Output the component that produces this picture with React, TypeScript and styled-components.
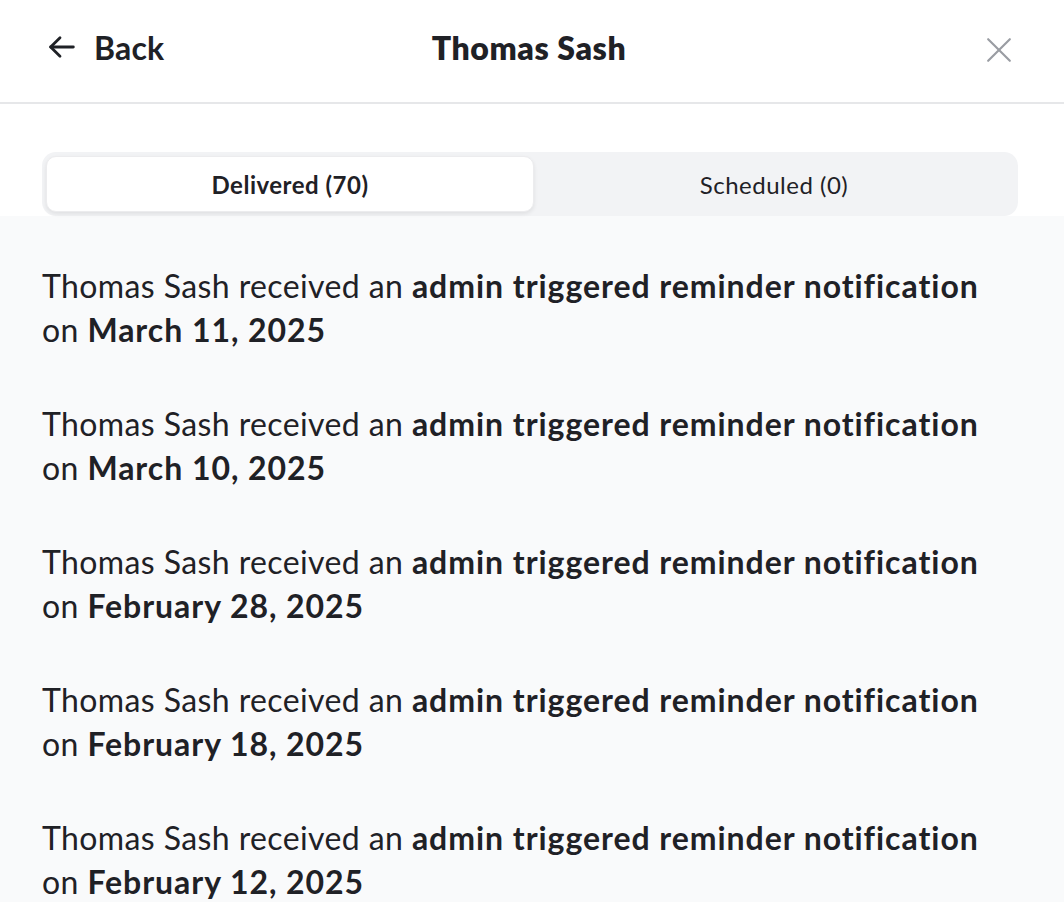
import React, {useState} from 'react';
import styled, {createGlobalStyle} from 'styled-components';

const GlobalStyle = createGlobalStyle`
	html, body {
		margin: 0;
		padding: 0;
		background: #ffffff;
	}
	body {
		font-family: Lato, "Noto Sans", sans-serif;
		color: #1f2126;
	}
`;

const Page = styled.div`
	width: 1064px;
	min-height: 902px;
	display: flex;
	flex-direction: column;
	background: #f9fafb;
`;

const Header = styled.header`
	height: 104px;
	box-sizing: border-box;
	display: grid;
	grid-template-columns: 1fr auto 1fr;
	align-items: center;
	padding: 0 52px 8px 46px;
	background: #ffffff;
	border-bottom: 2px solid #e6e7e9;
`;

const BackButton = styled.button`
	justify-self: start;
	display: flex;
	align-items: center;
	gap: 16px;
	background: none;
	border: none;
	padding: 0;
	font-family: inherit;
	font-size: 32px;
	font-weight: 700;
	letter-spacing: 0.2px;
	color: #1f2126;
	cursor: pointer;
`;

const Title = styled.h1`
	margin: 0;
	font-size: 32px;
	font-weight: 800;
	letter-spacing: 0.6px;
	color: #1f2126;
`;

const CloseButton = styled.button`
	justify-self: end;
	display: flex;
	margin-top: 6px;
	background: none;
	border: none;
	padding: 0;
	cursor: pointer;
`;

const TabsArea = styled.div`
	background: #ffffff;
	padding: 48px 46px 0 42px;
`;

const TabList = styled.div`
	display: grid;
	grid-template-columns: 488px 1fr;
	padding: 4px;
	height: 64px;
	box-sizing: border-box;
	background: #f2f3f5;
	border-radius: 14px;
`;

const Tab = styled.button<{$active?: boolean}>`
	border: ${p => (p.$active ? '1px solid #ececee' : 'none')};
	border-radius: 10px;
	background: ${p => (p.$active ? '#ffffff' : 'transparent')};
	box-shadow: ${p => (p.$active ? '0 2px 4px rgba(0, 0, 0, 0.08)' : 'none')};
	font-family: inherit;
	font-size: 24px;
	letter-spacing: 0.5px;
	font-weight: ${p => (p.$active ? 700 : 400)};
	color: #1f2126;
	cursor: pointer;
`;

const List = styled.ul`
	list-style: none;
	margin: 0;
	padding: 48px 42px 0;
	display: flex;
	flex-direction: column;
	gap: 50px;
`;

const Item = styled.li`
	font-size: 32px;
	line-height: 44px;
	letter-spacing: 0.4px;
	color: #1f2126;

	b {
		font-weight: 700;
		letter-spacing: 0.95px;
	}
`;

const ArrowLeft = () => (
	<svg width="32" height="32" viewBox="0 0 24 24" fill="none" stroke="#1f2126" strokeWidth="2.1" strokeLinecap="round" strokeLinejoin="round">
		<path d="M20.5 12H3.5" />
		<path d="M10.5 5l-7 7 7 7" />
	</svg>
);

const CloseIcon = () => (
	<svg width="26" height="26" viewBox="0 0 24 24" fill="none" stroke="#9a9da3" strokeWidth="2" strokeLinecap="round">
		<path d="M2 2l20 20" />
		<path d="M22 2L2 22" />
	</svg>
);

const dates = ['March 11, 2025', 'March 10, 2025', 'February 28, 2025', 'February 18, 2025', 'February 12, 2025'];

export default function App() {
	const [tab, setTab] = useState<'delivered' | 'scheduled'>('delivered');

	return (
		<Page>
			<GlobalStyle />
			<Header>
				<BackButton>
					<ArrowLeft />
					Back
				</BackButton>
				<Title>Thomas Sash</Title>
				<CloseButton aria-label="Close">
					<CloseIcon />
				</CloseButton>
			</Header>
			<TabsArea>
				<TabList>
					<Tab $active={tab === 'delivered'} onClick={() => setTab('delivered')}>Delivered (70)</Tab>
					<Tab $active={tab === 'scheduled'} onClick={() => setTab('scheduled')}>Scheduled (0)</Tab>
				</TabList>
			</TabsArea>
			<List>
				{dates.map(d => (
					<Item key={d}>
						Thomas Sash received an <b>admin triggered reminder notification</b> on <b>{d}</b>
					</Item>
				))}
			</List>
		</Page>
	);
}
